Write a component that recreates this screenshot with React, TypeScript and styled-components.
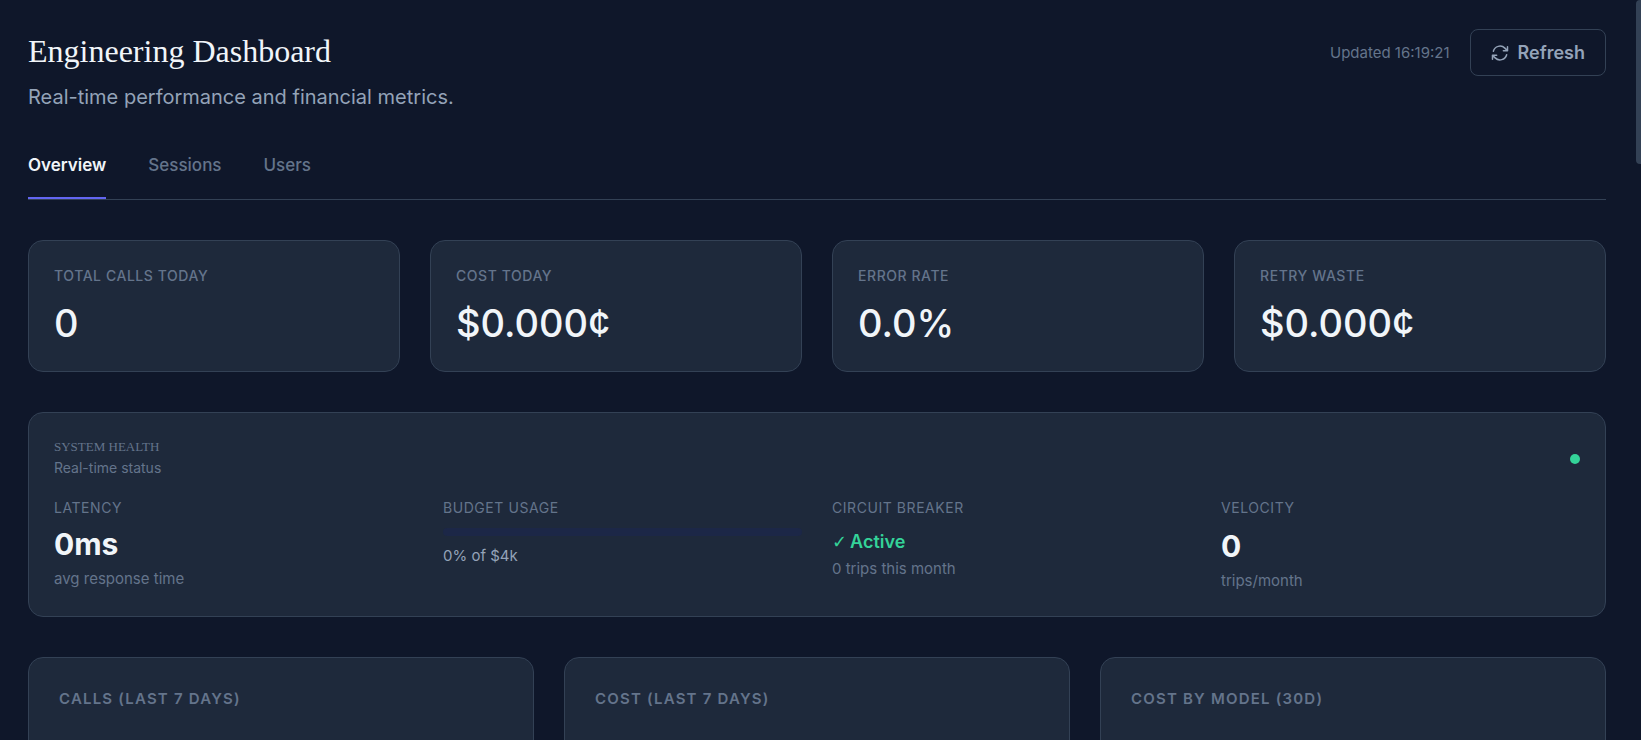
import React from "react";
import styled, { createGlobalStyle } from "styled-components";

const color = {
  page: "#0f172a",
  card: "#1e293b",
  line: "#334155",
  muted: "#64748b",
  soft: "#94a3b8",
  bright: "#f1f5f9",
  accent: "#6366f1",
  good: "#34d399",
};

const GlobalStyle = createGlobalStyle`
  *, *::before, *::after { box-sizing: border-box; }
  html { background: ${color.page}; }
  body {
    margin: 0;
    height: 100vh;
    overflow: hidden;
    background: ${color.page};
    color: ${color.bright};
    font-family: Inter, "Liberation Sans", sans-serif;
    font-size: 16px;
  }
  h1, h2, h3, p { margin: 0; }
`;

const Page = styled.main`
  display: flex;
  flex-direction: column;
  gap: 40px;
  padding: 29px 35px 40px 28px;
`;

const ScrollThumb = styled.div`
  position: fixed;
  top: 0;
  right: 0;
  width: 5px;
  height: 164px;
  border-radius: 4px 0 0 4px;
  background: ${color.line};
`;

const Header = styled.header`
  display: flex;
  align-items: flex-start;
  justify-content: space-between;
`;

const Title = styled.h1`
  font-family: "Liberation Serif", serif;
  font-size: 32px;
  font-weight: 400;
  line-height: 44px;
  color: ${color.bright};
`;

const Subtitle = styled.p`
  font-size: 20px;
  line-height: 32px;
  padding-top: 8px;
  color: ${color.soft};
`;

const Actions = styled.div`
  display: flex;
  align-items: center;
  gap: 20px;
`;

const Updated = styled.span`
  font-size: 15px;
  color: ${color.muted};
`;

const RefreshButton = styled.button`
  display: flex;
  align-items: center;
  gap: 8px;
  height: 47px;
  padding: 0 20px 0 19px;
  border: 1px solid ${color.line};
  border-radius: 8px;
  background: transparent;
  color: ${color.soft};
  font: 600 18px Inter, "Liberation Sans", sans-serif;
  cursor: pointer;
`;

const Tabs = styled.nav`
  display: flex;
  gap: 42px;
  border-bottom: 1px solid ${color.line};
`;

const Tab = styled.button<{ $active?: boolean }>`
  height: 46px;
  padding: 0 0 20px;
  border: 0;
  border-bottom: 2px solid ${(p) => (p.$active ? color.accent : "transparent")};
  background: none;
  color: ${(p) => (p.$active ? color.bright : color.muted)};
  font: ${(p) => (p.$active ? 600 : 500)} 17px/24px Inter, "Liberation Sans", sans-serif;
  cursor: pointer;
`;

const Grid = styled.div<{ $columns: number }>`
  display: grid;
  grid-template-columns: repeat(${(p) => p.$columns}, minmax(0, 1fr));
  gap: 30px;
`;

const Card = styled.section<{ $roomy?: boolean }>`
  padding: ${(p) => (p.$roomy ? "30px" : "25px")};
  border: 1px solid ${color.line};
  border-radius: 15px;
  background: ${color.card};
`;

const Label = styled.h3`
  font-size: 14px;
  line-height: 20px;
  font-weight: 500;
  letter-spacing: 0.04em;
  text-transform: uppercase;
  color: ${color.muted};
`;

const MetricLabel = styled(Label)`
  font-weight: 400;
`;

const StatValue = styled.p`
  margin-top: 14px;
  font-size: 38px;
  line-height: 46px;
  font-weight: 500;
`;

const HealthHead = styled.div`
  display: flex;
  align-items: center;
  justify-content: space-between;
  margin-bottom: 18px;
`;

const HealthTitle = styled.h2`
  font-family: "Liberation Serif", serif;
  font-size: 13px;
  line-height: 18px;
  font-weight: 400;
  text-transform: uppercase;
  color: ${color.muted};
`;

const HealthNote = styled.p`
  font-size: 14px;
  line-height: 24px;
  color: ${color.muted};
`;

const StatusDot = styled.span`
  width: 10px;
  height: 10px;
  border-radius: 50%;
  background: ${color.good};
`;

const Metric = styled.div`
  display: flex;
  flex-direction: column;
`;

const MetricValue = styled.p<{ $gap: number }>`
  margin-top: ${(p) => p.$gap}px;
  font-size: 30px;
  line-height: 40px;
  font-weight: 700;
`;

const MetricNote = styled.p<{ $light?: boolean }>`
  margin-top: ${(p) => (p.$light ? 10 : 5)}px;
  font-size: 15px;
  line-height: 20px;
  color: ${(p) => (p.$light ? color.soft : color.muted)};
`;

const ProgressTrack = styled.div`
  height: 8px;
  margin-top: 10px;
  border-radius: 4px;
  background: #1c2747;
`;

const Active = styled.p`
  display: flex;
  align-items: center;
  gap: 3px;
  margin-top: 12px;
  font-size: 18px;
  line-height: 24px;
  font-weight: 600;
  color: ${color.good};
`;

const Check = styled.span`
  font-family: "DejaVu Sans", sans-serif;
  font-size: 18px;
  line-height: 24px;
  font-weight: 700;
`;

const ChartTitle = styled.h2`
  font-size: 15px;
  line-height: 22px;
  font-weight: 600;
  letter-spacing: 0.08em;
  text-transform: uppercase;
  color: ${color.muted};
`;

const ChartArea = styled.div`
  height: 260px;
`;

const RefreshIcon = () => (
  <svg width="20" height="20" viewBox="0 0 24 24" fill="none" stroke="currentColor" strokeWidth="1.8" strokeLinecap="round" strokeLinejoin="round" aria-hidden="true">
    <path d="M16.023 9.348h4.992v-.001M2.985 19.644v-4.992m0 0h4.992m-4.993 0l3.181 3.183a8.25 8.25 0 0013.803-3.7M4.031 9.865a8.25 8.25 0 0113.803-3.7l3.181 3.182m0-4.991v4.99" />
  </svg>
);

const stats = [
  { label: "Total calls today", value: "0" },
  { label: "Cost today", value: "$0.000¢" },
  { label: "Error rate", value: "0.0%" },
  { label: "Retry waste", value: "$0.000¢" },
];

const tabs = ["Overview", "Sessions", "Users"];
const charts = ["Calls (last 7 days)", "Cost (last 7 days)", "Cost by model (30d)"];

export default function App() {
  return (
    <>
      <GlobalStyle />
      <Page>
        <Header>
          <div>
            <Title>Engineering Dashboard</Title>
            <Subtitle>Real-time performance and financial metrics.</Subtitle>
          </div>
          <Actions>
            <Updated>Updated 16:19:21</Updated>
            <RefreshButton type="button">
              <RefreshIcon />
              Refresh
            </RefreshButton>
          </Actions>
        </Header>

        <Tabs>
          {tabs.map((tab, i) => (
            <Tab key={tab} type="button" $active={i === 0}>
              {tab}
            </Tab>
          ))}
        </Tabs>

        <Grid $columns={4}>
          {stats.map((stat) => (
            <Card key={stat.label}>
              <Label>{stat.label}</Label>
              <StatValue>{stat.value}</StatValue>
            </Card>
          ))}
        </Grid>

        <Card>
          <HealthHead>
            <div>
              <HealthTitle>System Health</HealthTitle>
              <HealthNote>Real-time status</HealthNote>
            </div>
            <StatusDot />
          </HealthHead>
          <Grid $columns={4}>
            <Metric>
              <MetricLabel>Latency</MetricLabel>
              <MetricValue $gap={6}>0ms</MetricValue>
              <MetricNote>avg response time</MetricNote>
            </Metric>
            <Metric>
              <MetricLabel>Budget usage</MetricLabel>
              <ProgressTrack />
              <MetricNote $light>0% of $4k</MetricNote>
            </Metric>
            <Metric>
              <MetricLabel>Circuit breaker</MetricLabel>
              <Active>
                <Check>✓</Check> Active
              </Active>
              <MetricNote>0 trips this month</MetricNote>
            </Metric>
            <Metric>
              <MetricLabel>Velocity</MetricLabel>
              <MetricValue $gap={8}>0</MetricValue>
              <MetricNote>trips/month</MetricNote>
            </Metric>
          </Grid>
        </Card>

        <Grid $columns={3}>
          {charts.map((title) => (
            <Card key={title} $roomy>
              <ChartTitle>{title}</ChartTitle>
              <ChartArea />
            </Card>
          ))}
        </Grid>
      </Page>
      <ScrollThumb />
    </>
  );
}
